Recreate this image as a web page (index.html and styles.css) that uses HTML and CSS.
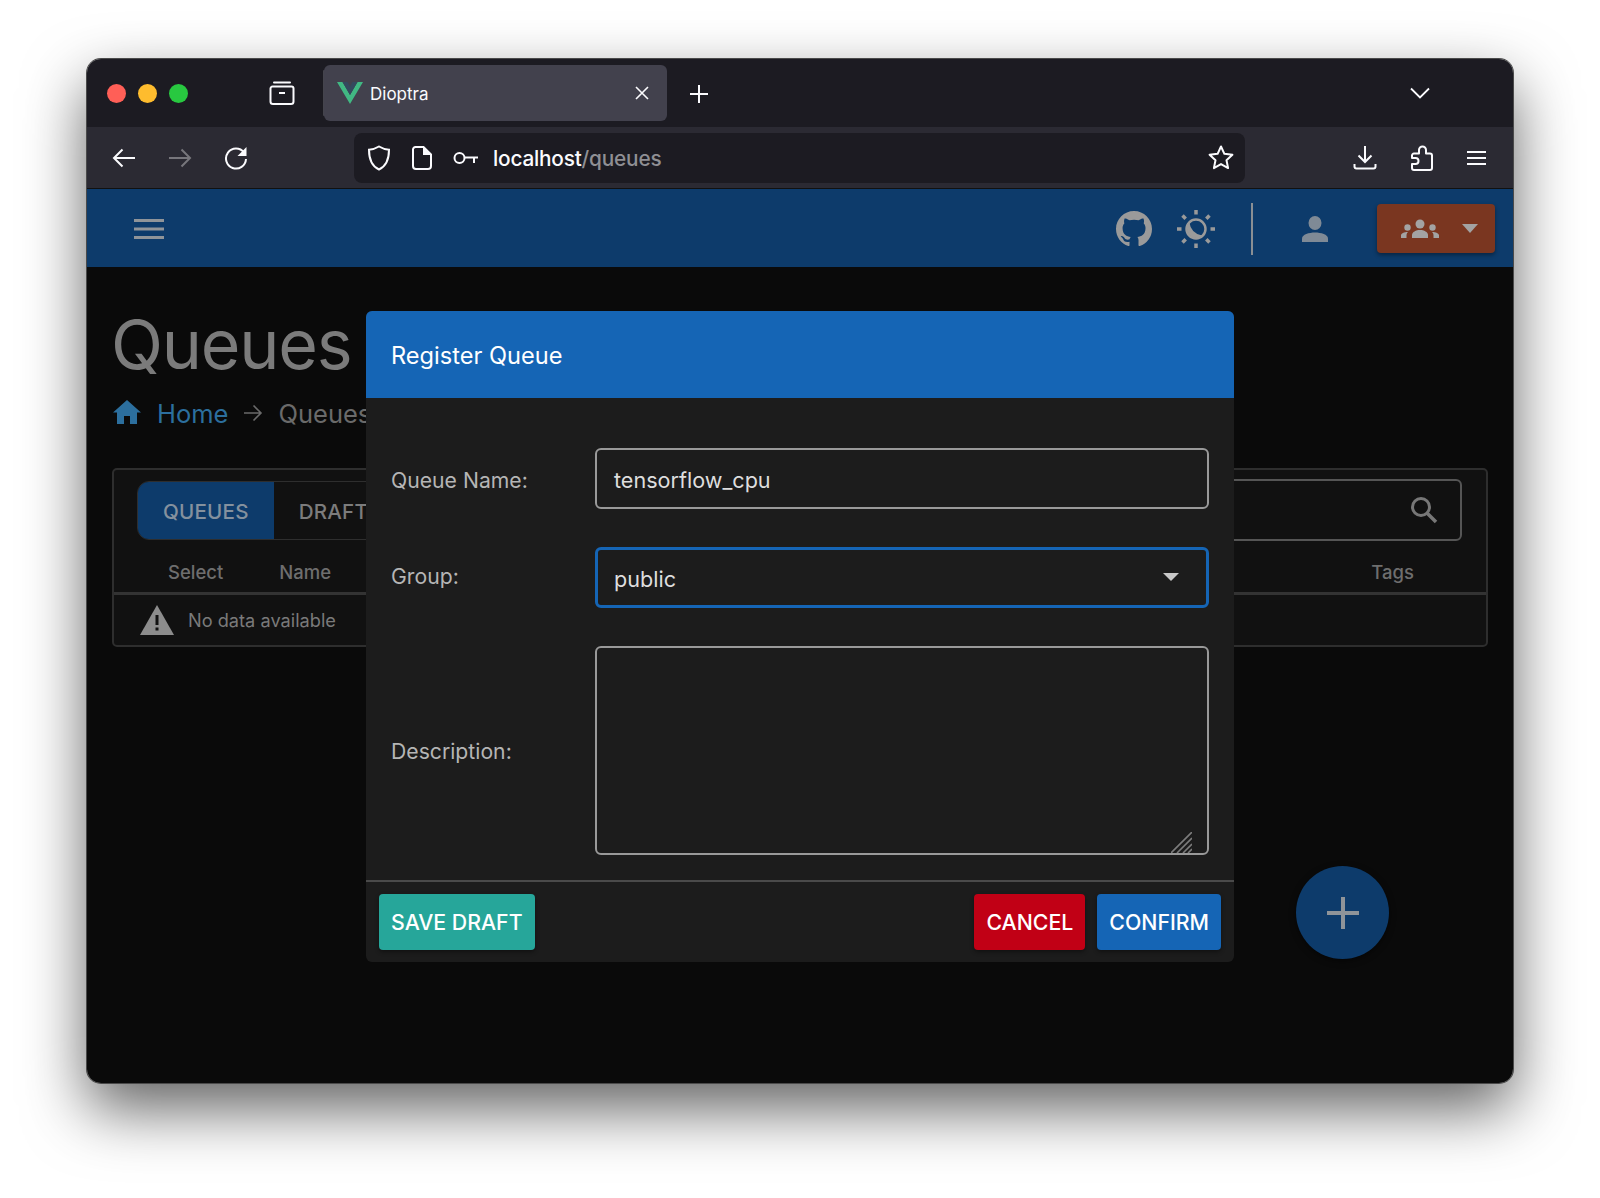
FILE: index.html
```html
<!DOCTYPE html>
<html>
    <head>
        <title>Dioptra</title>
        <link rel="stylesheet" href="styles.css">
    </head>
    <body>
        <div class="window">
            <div class="tabstrip">
                <div class="lights">
                    <span class="light red"></span>
                    <span class="light yellow"></span>
                    <span class="light green"></span>
                </div>
                <svg class="ff-view" width="28" height="26" viewBox="0 0 28 26"><g fill="none" stroke="#fbfbfe" stroke-width="2"><path d="M6 2.500h16" stroke-linecap="round"/><path d="M2.500 8.500a2 2 0 0 1 2-2h19a2 2 0 0 1 2 2v13a2.500 2.500 0 0 1-2.500 2.500H5a2.500 2.500 0 0 1-2.500-2.500z"/><path d="M11 13h6"/></g></svg>
                <div class="tab">
                    <svg width="26" height="22" viewBox="0 0 26 22"><path d="M0 0h5.500L13 13 20.500 0H26L13 22z" fill="#41b883"/><path d="M5.500 0h5L13 4.500 15.500 0h5L13 13z" fill="#34495e"/></svg>
                    <span class="tab-title">Dioptra</span>
                    <svg class="tab-close" width="14" height="14" viewBox="0 0 14 14"><path d="M1 1l12 12M13 1L1 13" stroke="#fbfbfe" stroke-width="1.600"/></svg>
                </div>
                <svg class="new-tab" width="20" height="20" viewBox="0 0 20 20"><path d="M10 1v18M1 10h18" stroke="#fbfbfe" stroke-width="2"/></svg>
                <svg class="tab-list" width="20" height="12" viewBox="0 0 20 12"><path d="M1 1.500l9 9 9-9" fill="none" stroke="#fbfbfe" stroke-width="1.800"/></svg>
            </div>
            <div class="toolbar">
                <svg class="nav" width="24" height="20" viewBox="0 0 24 20"><path d="M23 10H2M10.500 1.500L2 10l8.500 8.500" fill="none" stroke="#fbfbfe" stroke-width="2"/></svg>
                <svg class="nav" width="24" height="20" viewBox="0 0 24 20"><path d="M1 10h21M13.500 1.500L22 10l-8.500 8.500" fill="none" stroke="#77767c" stroke-width="2"/></svg>
                <svg class="nav" width="24" height="24" viewBox="0 0 24 24"><path d="M20 6.500A10 10 0 1 0 22 13" fill="none" stroke="#fbfbfe" stroke-width="2"/><path d="M22.500 1v9h-9z" fill="#fbfbfe"/></svg>
                <div class="urlbar">
                    <svg width="24" height="26" viewBox="0 0 24 26"><path d="M12 1.500c3 1.800 6.500 3 10 3.200 0 8.500-2 16-10 19.800C4 20.700 2 13.200 2 4.700c3.500-.2 7-1.400 10-3.200z" fill="none" stroke="#fbfbfe" stroke-width="2"/></svg>
                    <svg width="20" height="24" viewBox="0 0 20 24"><path d="M3.500 1h8L19 8.500V20a3 3 0 0 1-3 3H4a3 3 0 0 1-3-3V3.500A2.500 2.500 0 0 1 3.500 1z" fill="none" stroke="#fbfbfe" stroke-width="2"/><path d="M11 1v8h8" fill="#fbfbfe"/></svg>
                    <svg width="26" height="14" viewBox="0 0 26 14"><circle cx="6.500" cy="7" r="5" fill="none" stroke="#fbfbfe" stroke-width="2"/><path d="M11.500 6.500H25M21 6.500V12" fill="none" stroke="#fbfbfe" stroke-width="2"/></svg>
                    <div class="url"><span class="host">localhost</span><span class="path">/queues</span></div>
                    <svg class="star" width="26" height="25" viewBox="0 0 26 25"><path d="M13 1.500l3.400 7.300 8 1-5.900 5.400 1.600 7.900-7.100-4-7.100 4 1.600-7.900-5.900-5.400 8-1z" fill="none" stroke="#fbfbfe" stroke-width="2" stroke-linejoin="round"/></svg>
                </div>
                <div class="tool-right">
                    <svg width="24" height="24" viewBox="0 0 24 24"><path d="M12 0v16M5.500 9.500L12 16l6.500-6.500M1.500 18v2.500a2 2 0 0 0 2 2h17a2 2 0 0 0 2-2V18" fill="none" stroke="#fbfbfe" stroke-width="2"/></svg>
                    <svg width="22" height="26" viewBox="0 0 22 26"><path d="M3 25a2 2 0 0 1-2-2v-4h3.500a3 3 0 0 0 0-6H1V10.500A2 2 0 0 1 3 8.500h5V5a3.500 3.500 0 0 1 7 0v3.500h4a2 2 0 0 1 2 2V23a2 2 0 0 1-2 2z" fill="none" stroke="#fbfbfe" stroke-width="2" stroke-linejoin="round"/></svg>
                    <svg width="19" height="16" viewBox="0 0 19 16"><path d="M0 2h19M0 8h19M0 14h19" stroke="#fbfbfe" stroke-width="2"/></svg>
                </div>
            </div>
            <div class="app">
                <header class="app-header">
                    <svg width="30" height="20" viewBox="0 0 30 20"><path d="M0 1.500h30M0 10h30M0 18.500h30" stroke="#8f9499" stroke-width="3"/></svg>
                    <svg class="github" width="38" height="36" viewBox="0 0 16 16"><path fill="#9a9a9a" d="M8 0C3.580 0 0 3.580 0 8c0 3.540 2.290 6.530 5.470 7.590.4.070.55-.17.550-.38 0-.19-.01-.82-.01-1.490-2.010.370-2.530-.490-2.690-.940-.090-.230-.480-.940-.820-1.130-.280-.150-.680-.520-.010-.530.630-.010 1.080.580 1.230.820.720 1.210 1.870.870 2.330.660.070-.520.280-.870.510-1.070-1.780-.200-3.640-.890-3.640-3.950 0-.870.310-1.590.820-2.150-.080-.200-.360-1.020.080-2.120 0 0 .670-.210 2.200.820.640-.180 1.320-.270 2-.270s1.360.090 2 .270c1.530-1.040 2.200-.820 2.200-.820.440 1.100.160 1.920.080 2.120.510.560.820 1.270.820 2.150 0 3.070-1.870 3.750-3.650 3.950.290.250.540.730.540 1.480 0 1.070-.010 1.930-.010 2.200 0 .210.150.460.550.380A8.010 8.010 0 0 0 16 8c0-4.420-3.580-8-8-8z"/></svg>
                    <svg class="theme" width="38" height="38" viewBox="0 0 38 38"><g stroke="#9a9a9a" stroke-width="3.500"><path d="M19 0v4.500M19 33.500V38M0 19h4.500M33.500 19H38M5.500 5.500l3.200 3.200M29.300 29.300l3.200 3.200M5.500 32.500l3.200-3.200M29.300 8.700l3.200-3.200"/></g><circle cx="19" cy="19" r="9.500" fill="none" stroke="#9a9a9a" stroke-width="2.500"/><path d="M12.300 12.300A9.500 9.500 0 0 0 25.700 25.700Q14 24 12.300 12.300z" fill="#9a9a9a"/></svg>
                    <span class="header-rule"></span>
                    <svg class="person" width="26" height="26" viewBox="0 0 26 26"><ellipse cx="13" cy="7" rx="6.500" ry="7" fill="#7f8a96"/><path d="M0 26v-3.500c0-4 7-6 13-6s13 2 13 6V26z" fill="#7f8a96"/></svg>
                    <div class="group-btn">
                        <svg width="38" height="20" viewBox="0 0 38 20"><g fill="#a3a3a3"><circle cx="19" cy="5" r="4.500"/><path d="M11 19v-3c0-3 4-5 8-5s8 2 8 5v3z"/><circle cx="6.500" cy="8.500" r="3.200"/><path d="M0 19v-2.500c0-2 3-3.500 7-3.500-1 1-1.500 2-1.500 3.500V19z"/><circle cx="31.500" cy="8.500" r="3.200"/><path d="M38 19v-2.500c0-2-3-3.500-7-3.500 1 1 1.500 2 1.500 3.500V19z"/></g></svg>
                        <span class="caret"></span>
                    </div>
                </header>
                <main class="page">
                    <h1 class="page-title">Queues</h1>
                    <div class="crumbs">
                        <svg class="crumb-home" width="28" height="24" viewBox="0 0 28 24"><path d="M14 0L0 12.500h4V24h7v-8h6v8h7V12.500h4z" fill="#2c6f9e"/></svg>
                        <span class="crumb-link">Home</span>
                        <svg class="crumb-arrow" width="20" height="18" viewBox="0 0 20 18"><path d="M1 9h17M10.500 1.500L18 9l-7.500 7.500" fill="none" stroke="#6a6a6a" stroke-width="1.600"/></svg>
                        <span class="crumb-here">Queues</span>
                    </div>
                    <section class="card">
                        <div class="card-top">
                            <div class="tabs">
                                <div class="tab-btn active">QUEUES</div>
                                <div class="tab-btn">DRAFTS</div>
                            </div>
                            <div class="search">
                                <svg width="28" height="28" viewBox="0 0 28 28"><circle cx="11" cy="11" r="8.500" fill="none" stroke="#777" stroke-width="3"/><path d="M17 17l9 9" stroke="#777" stroke-width="3.500"/></svg>
                            </div>
                        </div>
                        <div class="thead">
                            <span class="th select">Select</span>
                            <span class="th">Name</span>
                            <span class="th tags">Tags</span>
                        </div>
                        <div class="empty">
                            <svg width="34" height="30" viewBox="0 0 34 30"><path d="M17 0l17 30H0z" fill="#8c8c8c"/><path d="M15.500 10h3v10h-3zM15.500 22.500h3v3h-3z" fill="#111"/></svg>
                            <span>No data available</span>
                        </div>
                    </section>
                </main>
                <div class="fab">
                    <svg width="32" height="32" viewBox="0 0 32 32"><path d="M16 0v32M0 16h32" stroke="#8f9499" stroke-width="4"/></svg>
                </div>
                <div class="overlay">
                    <div class="modal">
                        <div class="modal-head">Register Queue</div>
                        <div class="modal-body">
                            <label class="field-label name">Queue Name:</label>
                            <div class="field">tensorflow_cpu</div>
                            <label class="field-label group">Group:</label>
                            <div class="field focused">public<span class="select-caret"></span></div>
                            <label class="field-label desc">Description:</label>
                            <div class="field area">
                                <svg class="resize" width="21" height="21" viewBox="0 0 21 21"><path d="M0 21L21 0M6 21L21 6M12 21l9-9M17 21l4-4" stroke="#7c7c7c" stroke-width="1.600"/></svg>
                            </div>
                        </div>
                        <div class="modal-foot">
                            <div class="btn teal">SAVE DRAFT</div>
                            <div class="foot-right">
                                <div class="btn red-btn">CANCEL</div>
                                <div class="btn blue">CONFIRM</div>
                            </div>
                        </div>
                    </div>
                </div>
            </div>
        </div>
    </body>
</html>
```

FILE: styles.css
```css
html, body {
    height: 100%;
    margin: 0;
    padding: 0;
}
body {
    background: #fff;
    padding: 59px 87px 0 87px;
    box-sizing: border-box;
    overflow: hidden;
    font-family: Inter, sans-serif;
}
.window {
    height: 1024px;
    position: relative;
    display: flex;
    flex-direction: column;
    border-radius: 14px;
    overflow: hidden;
    box-shadow: 0 0 0 1px #4a4a4a;
}
body::before {
    content: "";
    position: absolute;
    left: 87px;
    top: 59px;
    width: 1426px;
    height: 1024px;
    border-radius: 14px;
    box-shadow: 0 26px 62px rgba(0, 0, 0, .62);
}

/* browser chrome */
.tabstrip {
    height: 68px;
    flex: none;
    display: flex;
    align-items: center;
    background: #1c1b22;
    padding-left: 20px;
}
.lights {
    display: flex;
    gap: 12px;
}
.light {
    width: 19px;
    height: 19px;
    border-radius: 50%;
}
.red { background: #ff5f57; }
.yellow { background: #febc2e; }
.green { background: #28c840; }
.ff-view {
    margin-left: 80px;
}
.tab {
    width: 343px;
    height: 56px;
    box-sizing: border-box;
    margin-left: 28px;
    padding: 0 18px 0 13px;
    display: flex;
    align-items: center;
    background: #42414d;
    border-radius: 6px;
    box-shadow: -6px 0 0 -5px #44444c;
}
.tab-title {
    margin-left: 7px;
    padding-top: 2px;
    font-size: 17px;
    color: #fbfbfe;
    flex: 1;
}
.new-tab {
    margin: 2px 0 0 22px;
}
.tab-list {
    margin-left: auto;
    margin-right: 83px;
}
.toolbar {
    height: 62px;
    flex: none;
    display: flex;
    align-items: center;
    background: #2b2a33;
    padding-left: 25px;
    box-sizing: border-box;
    border-bottom: 1px solid #111;
}
.nav {
    margin-right: 32px;
}
.urlbar {
    width: 891px;
    height: 50px;
    margin-left: 74px;
    padding: 0 11px 0 13px;
    box-sizing: border-box;
    display: flex;
    align-items: center;
    gap: 21px;
    background: #1c1b22;
    border-radius: 8px;
}
.url {
    flex: 1;
    padding-top: 2px;
    font-size: 20.800px;
    font-weight: 500;
    letter-spacing: -.2px;
    margin-left: -7px;
}
.host { color: #fbfbfe; }
.path { color: #8f8f94; }
.tool-right {
    display: flex;
    align-items: center;
    gap: 34px;
    margin-left: 108px;
}

/* app */
.app {
    flex: 1;
    position: relative;
    display: flex;
    flex-direction: column;
    background: #0a0a0a;
    min-height: 0;
}
.app-header {
    height: 78px;
    flex: none;
    display: flex;
    align-items: center;
    padding: 1px 18px 0 47px;
    box-sizing: border-box;
    background: #0d3b6b;
}
.github {
    margin-left: auto;
}
.theme {
    margin-left: 24px;
}
.header-rule {
    width: 2px;
    height: 52px;
    margin-left: 36px;
    background: #8a8f94;
}
.person {
    margin-left: 49px;
}
.group-btn {
    width: 118px;
    height: 49px;
    margin-left: 49px;
    display: flex;
    align-items: center;
    gap: 23px;
    padding-left: 24px;
    box-sizing: border-box;
    background: #7a3620;
    border-radius: 4px;
    box-shadow: 0 2px 4px rgba(0, 0, 0, .4);
}
.caret {
    width: 0;
    height: 0;
    border-left: 8px solid transparent;
    border-right: 8px solid transparent;
    border-top: 9px solid #a3a3a3;
}
.page {
    flex: 1;
    padding: 35px 25px 0 25px;
}
.page-title {
    margin: 0 0 0 -1px;
    font-weight: 400;
    font-size: 68px;
    line-height: 84px;
    letter-spacing: -1.200px;
    color: #7b7b7b;
}
.crumbs {
    display: flex;
    align-items: center;
    margin-top: 7px;
    height: 40px;
    font-size: 25.500px;
}
.crumb-home {
    margin: 0 16px 2px 1px;
}
.crumb-link {
    color: #2c6f9e;
}
.crumb-arrow {
    margin: 0 15px;
}
.crumb-here {
    color: #6a6a6a;
}
.card {
    margin-top: 35px;
    height: 179px;
    box-sizing: border-box;
    background: #111;
    border: 2px solid #2e2e2e;
    border-radius: 5px;
}
.card-top {
    display: flex;
    justify-content: space-between;
    padding: 9px 24px 0 23px;
}
.tabs {
    display: flex;
    height: 57px;
    margin-top: 2px;
    border: 1px solid #2e2e2e;
    border-radius: 12px;
    overflow: hidden;
}
.tab-btn {
    padding: 2px 25px 0 25px;
    display: flex;
    align-items: center;
    font-size: 20.600px;
    font-weight: 500;
    letter-spacing: .2px;
    color: #7c7c7c;
}
.tab-btn.active {
    background: #0d3b6b;
    color: #84919e;
}
.search {
    width: 300px;
    height: 62px;
    box-sizing: border-box;
    padding-right: 22px;
    display: flex;
    align-items: center;
    justify-content: flex-end;
    border: 2px solid #555;
    border-radius: 6px;
}
.thead {
    height: 54px;
    box-sizing: border-box;
    display: flex;
    align-items: center;
    padding: 10px 72px 0 54px;
    border-bottom: 3px solid #333;
}
.th {
    font-size: 18.500px;
    font-weight: 500;
    color: #6e6e6e;
}
.th.select {
    margin-right: 56px;
}
.th.tags {
    margin-left: auto;
}
.empty {
    display: flex;
    align-items: center;
    gap: 14px;
    padding: 10px 0 0 26px;
    font-size: 18.200px;
    color: #7a7a7a;
}
.fab {
    position: absolute;
    left: 1209px;
    top: 677px;
    width: 93px;
    height: 93px;
    border-radius: 50%;
    display: flex;
    align-items: center;
    justify-content: center;
    background: #0d3b6b;
    box-shadow: 0 2px 6px rgba(0, 0, 0, .5);
}

/* register dialog */
.overlay {
    position: absolute;
    inset: 0;
    display: flex;
    align-items: center;
    justify-content: center;
}
.modal {
    width: 868px;
    background: #1c1c1c;
    border-radius: 6px;
    overflow: hidden;
}
.modal-head {
    height: 87px;
    box-sizing: border-box;
    display: flex;
    align-items: center;
    padding: 2px 0 0 25px;
    background: #1565b5;
    color: #fff;
    font-size: 23.600px;
}
.modal-body {
    display: grid;
    grid-template-columns: 204px 1fr;
    row-gap: 38px;
    align-items: center;
    padding: 50px 25px 25px 25px;
    border-bottom: 2px solid #4a4a4a;
}
.field-label {
    font-size: 21.200px;
    color: #b5b5b5;
}
.field-label.name { padding-top: 3px; }
.field-label.group { padding-bottom: 2px; }
.field-label.desc { padding-top: 2px; }
.field {
    height: 61px;
    box-sizing: border-box;
    display: flex;
    align-items: center;
    justify-content: space-between;
    padding: 3px 27px 0 17px;
    border: 2px solid #999;
    border-radius: 6px;
    font-size: 21.600px;
    color: #dedede;
}
.field.focused {
    border: 3px solid #1565b5;
    padding-left: 16px;
}
.select-caret {
    width: 0;
    height: 0;
    margin-top: -3px;
    border-left: 8px solid transparent;
    border-right: 8px solid transparent;
    border-top: 8px solid #c8c8c8;
}
.field.area {
    height: 209px;
    position: relative;
}
.resize {
    position: absolute;
    right: 15px;
    bottom: 0;
}
.modal-foot {
    display: flex;
    justify-content: space-between;
    padding: 12px 13px;
}
.foot-right {
    display: flex;
    gap: 12px;
}
.btn {
    height: 56px;
    padding: 0 12px;
    display: flex;
    align-items: center;
    border-radius: 4px;
    color: #fff;
    font-size: 21.300px;
    font-weight: 500;
    box-shadow: 0 2px 4px rgba(0, 0, 0, .4);
}
.teal { background: #26a69a; }
.red-btn { background: #c10015; }
.blue { background: #1565b5; }
```
